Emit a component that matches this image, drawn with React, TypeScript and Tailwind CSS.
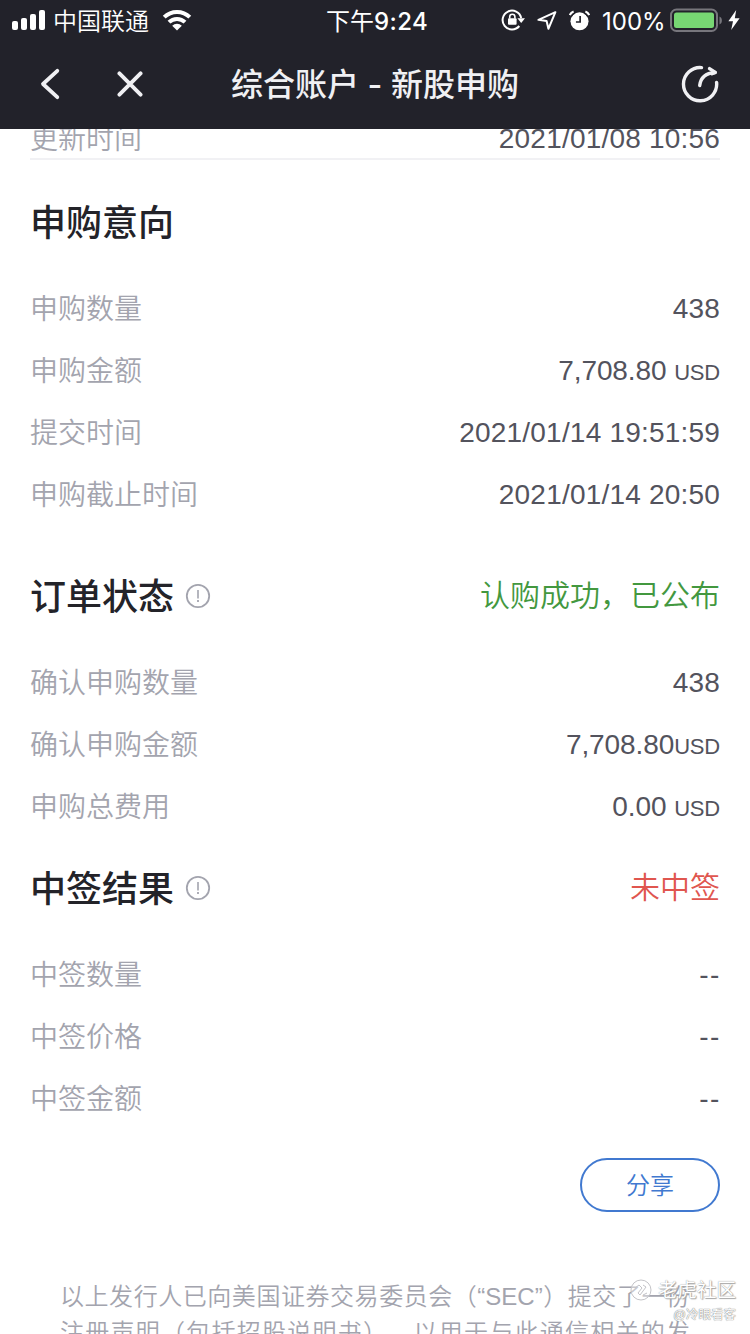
import type { ReactNode } from 'react';

interface RowProps {
  label: string;
  value: string;
  unit?: string;
}

function Row({ label, value, unit }: RowProps) {
  return (
    <div className="flex h-[62px] items-center justify-between text-[28px] leading-[40px]">
      <span className="pt-1 text-[#a3a4ae] font-[350]">{label}</span>
      {unit ? (
        <span className="pt-[3px] text-[#53535d] -tracking-[0.1px] whitespace-pre">
          {value}
          <span className="text-[22px] -tracking-[0.2px]">{unit}</span>
        </span>
      ) : value === '--' ? (
        <span className="-mr-px pt-0.5 text-[#53535d] tracking-[1.6px]">{value}</span>
      ) : (
        <span className="pt-0.5 text-[#53535d] tracking-[0.2px]">{value}</span>
      )}
    </div>
  );
}

function InfoIcon() {
  return (
    <svg className="mt-0.5 ml-[11px] h-[26px] w-[26px]" viewBox="0 0 26 26" fill="none" stroke="#a3a4ae">
      <circle cx="13" cy="13" r="11.2" strokeWidth="1.8" />
      <path d="M13 7v8.5" strokeWidth="1.6" />
      <path d="M13 17v2" strokeWidth="1.8" />
    </svg>
  );
}

interface HeadingProps {
  title: string;
  info?: boolean;
  children?: ReactNode;
}

function Heading({ title, info, children }: HeadingProps) {
  return (
    <div className="flex h-[56px] items-center justify-between">
      <div className="flex items-center">
        <h2 className="pt-[5px] text-[36px] leading-[51px] font-medium text-[#232329]">{title}</h2>
        {info && <InfoIcon />}
      </div>
      {children}
    </div>
  );
}

function StatusBar() {
  return (
    <div className="flex h-10 items-center pl-3 pr-[10px] text-white">
      <svg className="h-5 w-[34px]" viewBox="0 0 34 20" fill="#fff">
        <rect x="0" y="11" width="6" height="9" rx="2" />
        <rect x="9" y="8" width="6" height="12" rx="2" />
        <rect x="18" y="4" width="6" height="16" rx="2" />
        <rect x="27" y="0" width="6" height="20" rx="2" />
      </svg>
      <span className="ml-[7px] w-[97px] pt-[3px] text-[24px] leading-[37px] font-[350] whitespace-nowrap">中国联通</span>
      <svg className="ml-3 h-[22px] w-[30px]" viewBox="0 0 30 22" fill="none" stroke="#fff" strokeWidth="4">
        <path d="M2.2 8.2a18.2 18.2 0 0 1 25.6 0" />
        <path d="M7 13.2a11.4 11.4 0 0 1 16 0" />
        <path d="M15 21.5l-4.8-4.8a6.8 6.8 0 0 1 9.6 0z" fill="#fff" stroke="none" />
      </svg>
      <span className="ml-[134px] w-[104px] pt-[3px] text-[24px] leading-[37px] font-medium tracking-[0.4px] whitespace-nowrap font-['Inter','Noto_Sans_CJK_SC',sans-serif]">
        <span className="font-normal tracking-normal">下午</span>9:24
      </span>

      {/* rotation lock */}
      <svg className="ml-[71px] h-[22px] w-6" viewBox="0 0 24 22" fill="none" stroke="#fff" strokeWidth="2">
        <path d="M18.3 17A9.4 9.4 0 1 1 20.2 9" />
        <path d="M16.4 9.2h7.6l-3.8 4.8z" fill="#fff" stroke="none" />
        <rect x="7" y="9.2" width="8.6" height="6.6" rx="1" fill="#fff" stroke="none" />
        <path d="M8.7 9.5V7.8a2.6 2.6 0 0 1 5.2 0v1.7" strokeWidth="1.6" />
      </svg>
      <svg className="ml-[12px] h-5 w-5" viewBox="0 0 20 20" fill="none" stroke="#fff" strokeWidth="2" strokeLinejoin="round">
        <path d="M18.4 2.2L1.4 9.8l8.2 1.2 1.8 7.8z" />
      </svg>
      {/* alarm */}
      <svg className="ml-[12px] h-[21px] w-[21px]" viewBox="0 0 20 20" fill="none">
        <circle cx="10" cy="10.8" r="8.6" fill="#fff" />
        <path d="M10.6 5.8v5.6H6.6" stroke="#22222a" strokeWidth="1.6" />
        <path d="M1 5.2a6 6 0 0 1 4-3.8M19 5.2a6 6 0 0 0-4-3.8" stroke="#22222a" strokeWidth="4.6" />
        <path d="M.8 4.8a6 6 0 0 1 3.6-3.4M19.2 4.8a6 6 0 0 0-3.6-3.4" stroke="#fff" strokeWidth="2" />
      </svg>
      <span className="ml-3 w-[62px] pt-[3px] text-[24px] leading-[37px] whitespace-nowrap font-['Inter',sans-serif]">100%</span>
      <svg className="ml-[6px] h-6 w-[54px]" viewBox="0 0 54 24" fill="none">
        <rect x="1" y="1.5" width="46" height="21.5" rx="5.5" stroke="#77767c" strokeWidth="2" />
        <rect x="4" y="4.5" width="40" height="15.5" rx="2.5" fill="#77d773" />
        <path d="M49.5 8.5v8c3.2-1.2 3.2-6.8 0-8z" fill="#77767c" />
      </svg>
      <svg className="ml-[4px] h-5 w-3" viewBox="0 0 12 20" fill="#fff">
        <path d="M8.2 0L.4 11.2h4.6L3.2 20l8.4-11.8H6.8z" />
      </svg>
    </div>
  );
}

function NavBar() {
  return (
    <div className="flex h-[88px] items-center justify-between pl-10 pr-[31px] text-[#f0f0f3]">
      <div className="flex w-[150px] items-center">
        <svg className="h-8 w-5" viewBox="0 0 20 32" fill="none" stroke="#f0f0f3" strokeWidth="3.8" strokeLinecap="round" strokeLinejoin="round">
          <path d="M17.3 2.8L3 16l14.3 13.2" />
        </svg>
        <svg className="ml-[57px] h-[26px] w-[26px]" viewBox="0 0 27 27" fill="none" stroke="#f0f0f3" strokeWidth="4" strokeLinecap="round">
          <path d="M2.5 2.5l22 22M24.5 2.5l-22 22" />
        </svg>
      </div>
      <h1 className="pt-px text-[32px] leading-[48px] font-medium whitespace-nowrap font-['Inter','Noto_Sans_CJK_SC',sans-serif]">综合账户 - 新股申购</h1>
      <div className="flex w-[159px] justify-end">
        <svg className="h-[38px] w-[38px]" viewBox="0 0 38 38" fill="none" stroke="#f0f0f3" strokeWidth="3.4" strokeLinecap="round" strokeLinejoin="round">
          <path d="M20.5 2.6A16.6 16.6 0 1 0 35.6 17.5" />
          <path d="M18.7 20.5c.8-6.8 5.5-12.3 15.3-13" />
          <path d="M28.5 3.6l5.8 3.8-3.3 1.4" />
        </svg>
      </div>
    </div>
  );
}

export default function App() {
  return (
    <div className="flex h-[1334px] w-[750px] flex-col overflow-hidden bg-white font-['Liberation_Sans','Noto_Sans_CJK_SC',sans-serif]">
      <header className="h-[129px] shrink-0 bg-[#22222a]">
        <StatusBar />
        <NavBar />
      </header>

      <main className="relative min-h-0 flex-1 overflow-hidden">
        <div className="-mt-[22px] px-[30px]">
          <div className="h-[53px] border-b-2 border-[#f1f1f4]">
            <Row label="更新时间" value="2021/01/08 10:56" />
          </div>

          <section className="pt-[33px]">
            <Heading title="申购意向" />
            <div className="pt-[28px]">
              <Row label="申购数量" value="438" />
              <Row label="申购金额" value="7,708.80 " unit="USD" />
              <Row label="提交时间" value="2021/01/14 19:51:59" />
              <Row label="申购截止时间" value="2021/01/14 20:50" />
            </div>
          </section>

          <section className="pt-[42px]">
            <Heading title="订单状态" info>
              <span className="pt-0.5 text-[30px] leading-[44px] font-[350] text-[#43983f]">认购成功，已公布</span>
            </Heading>
            <div className="pt-[28px]">
              <Row label="确认申购数量" value="438" />
              <Row label="确认申购金额" value="7,708.80" unit="USD" />
              <Row label="申购总费用" value="0.00 " unit="USD" />
            </div>
          </section>

          <section className="pt-[22px]">
            <Heading title="中签结果" info>
              <span className="pt-0.5 text-[30px] leading-[44px] font-[350] text-[#e0564f]">未中签</span>
            </Heading>
            <div className="pt-[28px]">
              <Row label="中签数量" value="--" />
              <Row label="中签价格" value="--" />
              <Row label="中签金额" value="--" />
            </div>
          </section>

          <div className="flex justify-end pt-[29px]">
            <button className="h-[54px] w-[140px] rounded-full border-2 border-[#4179d0] pt-0.5 text-[24px] font-[350] text-[#4179d0]">
              分享
            </button>
          </div>

          <div className="px-[30px] pt-[67px] text-[24px] leading-[36px] font-[350] text-[#a3a4ae]">
            <p className="whitespace-nowrap [text-align-last:justify]">以上发行人已向美国证券交易委员会（“SEC”）提交了一份</p>
            <p className="whitespace-nowrap [text-align-last:justify] [text-spacing-trim:space-all]">注册声明（包括招股说明书），以用于与此通信相关的发</p>
          </div>
        </div>

        {/* community watermark */}
        <div className="absolute right-[14px] bottom-[6px] flex flex-col items-end">
          <div className="flex items-center gap-[6px]">
            <svg className="h-[22px] w-[22px]" viewBox="0 0 22 22" fill="none" stroke="#c4c4c8">
              <circle cx="11" cy="11" r="10" fill="#fff" fillOpacity="0.4" />
              <path d="M5 9l4-3 3 3-4 5 2 2 6-8-3-2M13 16l4-2" />
            </svg>
            <span className="text-[19.5px] leading-[26px] text-white [text-shadow:0_0_1px_#888,1px_1px_1px_#aaa]">老虎社区</span>
          </div>
          <span className="text-[12.5px] leading-[25px] text-white [text-shadow:0_0_1px_#777,0_0_1px_#888]">@冷眼看客</span>
        </div>
      </main>
    </div>
  );
}
